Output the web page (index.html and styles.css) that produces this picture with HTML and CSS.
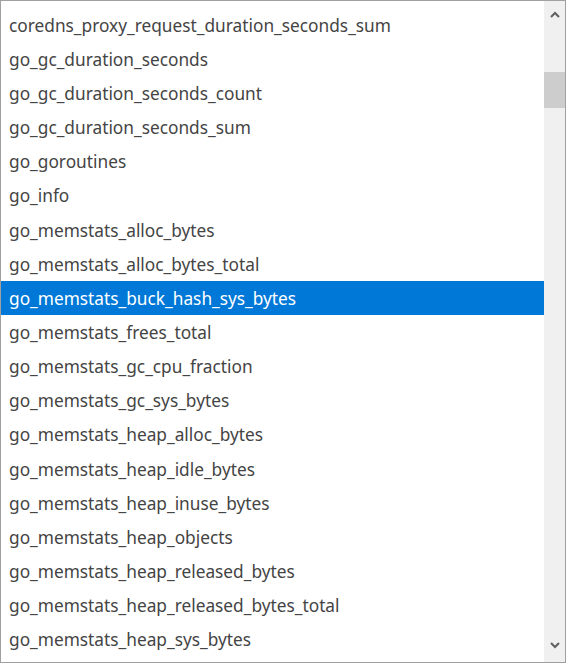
FILE: index.html
```html
<!DOCTYPE html>
<html>
<head>
<meta charset="utf-8">
<link rel="stylesheet" href="styles.css">
</head>
<body>
<div class="listbox">
  <ul class="items">
    <li>coredns_proxy_request_duration_seconds_sum</li>
    <li>go_gc_duration_seconds</li>
    <li>go_gc_duration_seconds_count</li>
    <li>go_gc_duration_seconds_sum</li>
    <li>go_goroutines</li>
    <li>go_info</li>
    <li>go_memstats_alloc_bytes</li>
    <li>go_memstats_alloc_bytes_total</li>
    <li class="selected">go_memstats_buck_hash_sys_bytes</li>
    <li>go_memstats_frees_total</li>
    <li>go_memstats_gc_cpu_fraction</li>
    <li>go_memstats_gc_sys_bytes</li>
    <li>go_memstats_heap_alloc_bytes</li>
    <li>go_memstats_heap_idle_bytes</li>
    <li>go_memstats_heap_inuse_bytes</li>
    <li>go_memstats_heap_objects</li>
    <li>go_memstats_heap_released_bytes</li>
    <li>go_memstats_heap_released_bytes_total</li>
    <li>go_memstats_heap_sys_bytes</li>
  </ul>
  <div class="scrollbar">
    <div class="arrow arrow-up">
      <svg width="10" height="7" viewBox="0 0 10 7"><path d="M1 6 L5 2 L9 6" fill="none" stroke="#606060" stroke-width="2"/></svg>
    </div>
    <div class="track">
      <div class="thumb"></div>
    </div>
    <div class="arrow arrow-down">
      <svg width="10" height="7" viewBox="0 0 10 7"><path d="M1 1 L5 5 L9 1" fill="none" stroke="#606060" stroke-width="2"/></svg>
    </div>
  </div>
</div>
</body>
</html>
```
FILE: styles.css
```css
html, body {
  margin: 0;
  padding: 0;
  background: #ffffff;
}
.listbox {
  width: 566px;
  height: 663px;
  box-sizing: border-box;
  border: 1px solid #a0a0a0;
  display: flex;
  overflow: hidden;
}
.items {
  list-style: none;
  margin: 0;
  padding: 6.6px 0 0 0;
  width: 543px;
  overflow: hidden;
  font-family: "Noto Sans", "Open Sans", sans-serif;
  font-size: 17.3px;
  color: #444444;
}
.items li {
  height: 33.17px;
  line-height: 33.17px;
  padding: 1px 0 0 8px;
  white-space: nowrap;
}
.items li.selected {
  background: #0078d7;
  color: #ffffff;
}
.scrollbar {
  width: 21px;
  background: #f0f0f0;
  display: flex;
  flex-direction: column;
}
.arrow {
  height: 24px;
  display: flex;
  align-items: center;
  justify-content: center;
  padding-left: 1px;
}
.arrow-up {
  padding-top: 1px;
}
.arrow-down {
  align-items: flex-start;
  padding-top: 0;
  height: 20px;
}
.track {
  flex: 1;
  padding-top: 46px;
}
.thumb {
  height: 36px;
  background: #cdcdcd;
}
```
